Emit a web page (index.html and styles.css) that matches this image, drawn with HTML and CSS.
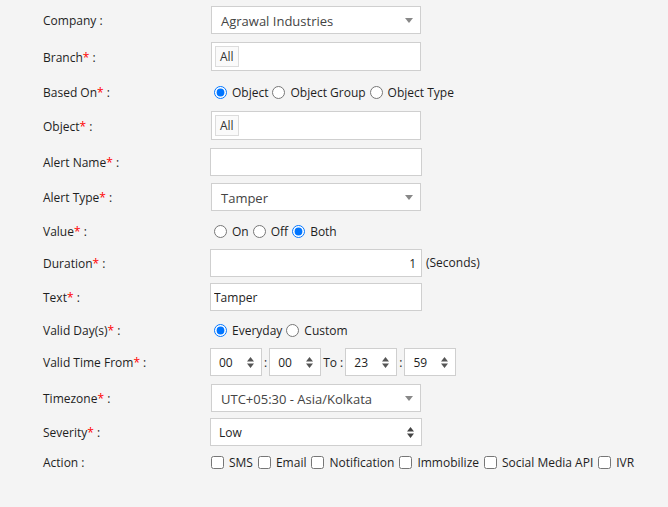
FILE: index.html
```html
<!DOCTYPE html>
<html>
<head>
<meta charset="utf-8">
<link rel="stylesheet" href="styles.css">
</head>
<body>
<form class="form">
  <div class="row">
    <label class="lbl">Company :</label>
    <div class="s2">
      <span class="s2-text">Agrawal Industries</span>
      <svg class="s2-arrow" width="8" height="5" viewBox="0 0 8 5"><path d="M0 0H8L4 5Z" fill="#888"/></svg>
    </div>
  </div>
  <div class="row">
    <label class="lbl">Branch<span class="req">*</span> :</label>
    <div class="tagbox"><span class="tag">All</span></div>
  </div>
  <div class="row">
    <label class="lbl">Based On<span class="req">*</span> :</label>
    <div class="opts">
      <label class="opt"><input type="radio" name="based" checked>Object</label>
      <label class="opt"><input type="radio" name="based">Object Group</label>
      <label class="opt"><input type="radio" name="based">Object Type</label>
    </div>
  </div>
  <div class="row">
    <label class="lbl">Object<span class="req">*</span> :</label>
    <div class="tagbox"><span class="tag">All</span></div>
  </div>
  <div class="row">
    <label class="lbl">Alert Name<span class="req">*</span> :</label>
    <input class="txt" type="text" value="">
  </div>
  <div class="row">
    <label class="lbl">Alert Type<span class="req">*</span> :</label>
    <div class="s2">
      <span class="s2-text">Tamper</span>
      <svg class="s2-arrow" width="8" height="5" viewBox="0 0 8 5"><path d="M0 0H8L4 5Z" fill="#888"/></svg>
    </div>
  </div>
  <div class="row">
    <label class="lbl">Value<span class="req">*</span> :</label>
    <div class="opts">
      <label class="opt"><input type="radio" name="val">On</label>
      <label class="opt"><input type="radio" name="val">Off</label>
      <label class="opt"><input type="radio" name="val" checked>Both</label>
    </div>
  </div>
  <div class="row">
    <label class="lbl">Duration<span class="req">*</span> :</label>
    <input class="txt num" type="text" value="1">
    <span class="unit">(Seconds)</span>
  </div>
  <div class="row">
    <label class="lbl">Text<span class="req">*</span> :</label>
    <input class="txt" type="text" value="Tamper">
  </div>
  <div class="row">
    <label class="lbl">Valid Day(s)<span class="req">*</span> :</label>
    <div class="opts">
      <label class="opt"><input type="radio" name="day" checked>Everyday</label>
      <label class="opt"><input type="radio" name="day">Custom</label>
    </div>
  </div>
  <div class="row">
    <label class="lbl">Valid Time From<span class="req">*</span> :</label>
    <div class="time">
      <div class="tsel"><span>00</span><svg class="updown" width="7" height="11" viewBox="0 0 7 11"><path d="M0 4.5L3.5 0L7 4.5ZM0 6.5H7L3.5 11Z" fill="#555"/></svg></div>
      <span class="sep">:</span>
      <div class="tsel"><span>00</span><svg class="updown" width="7" height="11" viewBox="0 0 7 11"><path d="M0 4.5L3.5 0L7 4.5ZM0 6.5H7L3.5 11Z" fill="#555"/></svg></div>
      <span class="sep to">To :</span>
      <div class="tsel"><span>23</span><svg class="updown" width="7" height="11" viewBox="0 0 7 11"><path d="M0 4.5L3.5 0L7 4.5ZM0 6.5H7L3.5 11Z" fill="#555"/></svg></div>
      <span class="sep">:</span>
      <div class="tsel"><span>59</span><svg class="updown" width="7" height="11" viewBox="0 0 7 11"><path d="M0 4.5L3.5 0L7 4.5ZM0 6.5H7L3.5 11Z" fill="#555"/></svg></div>
    </div>
  </div>
  <div class="row">
    <label class="lbl">Timezone<span class="req">*</span> :</label>
    <div class="s2">
      <span class="s2-text">UTC+05:30 - Asia/Kolkata</span>
      <svg class="s2-arrow" width="8" height="5" viewBox="0 0 8 5"><path d="M0 0H8L4 5Z" fill="#888"/></svg>
    </div>
  </div>
  <div class="row">
    <label class="lbl">Severity<span class="req">*</span> :</label>
    <div class="nsel">
      <span>Low</span>
      <svg class="updown" width="7" height="11" viewBox="0 0 7 11"><path d="M0 4.5L3.5 0L7 4.5ZM0 6.5H7L3.5 11Z" fill="#444"/></svg>
    </div>
  </div>
  <div class="row">
    <label class="lbl">Action :</label>
    <div class="opts checks">
      <label class="opt"><input type="checkbox">SMS</label>
      <label class="opt"><input type="checkbox">Email</label>
      <label class="opt"><input type="checkbox">Notification</label>
      <label class="opt"><input type="checkbox">Immobilize</label>
      <label class="opt"><input type="checkbox">Social Media API</label>
      <label class="opt"><input type="checkbox">IVR</label>
    </div>
  </div>
</form>
</body>
</html>
```

FILE: styles.css
```css
html, body {
  margin: 0;
  padding: 0;
  background: #f4f4f4;
}
body {
  font-family: "Open Sans", "Noto Sans", sans-serif;
  font-size: 12px;
  color: #1e1e1e;
}
.form {
  display: grid;
  grid-template-rows: 36px 37px 32px 37px 35px 35px 31px 34px 34px 31px 36px 34px 31px 26px;
  align-items: start;
  padding: 6px 0 0 43px;
}
.row {
  display: flex;
  align-items: center;
  min-height: 26px;
}
.lbl {
  width: 167px;
  flex: none;
  white-space: nowrap;
}
.row > .lbl {
  padding-top: 1px;
}
.req {
  color: #ff0000;
}
.s2 {
  box-sizing: border-box;
  width: 210px;
  height: 28px;
  margin-left: 1px;
  background: #fff;
  border: 1px solid #cfcfcf;
  display: flex;
  align-items: center;
  justify-content: space-between;
  padding: 1px 7px 0 9px;
  font-size: 13px;
  color: #444;
}
.s2-arrow {
  display: block;
}
.tagbox {
  box-sizing: border-box;
  width: 210px;
  height: 29px;
  margin-left: 1px;
  background: #fff;
  border: 1px solid #cfcfcf;
  display: flex;
  align-items: center;
  padding: 0 3px;
}
.tag {
  box-sizing: border-box;
  height: 21px;
  padding: 0 4px;
  border: 1px solid #dcdcdc;
  background: #fafafa;
  line-height: 19px;
  color: #333;
}
.txt {
  box-sizing: border-box;
  width: 212px;
  height: 28px;
  margin: 0;
  background: #fff;
  border: 1px solid #cfcfcf;
  border-radius: 0;
  padding: 0 3px;
  font-family: inherit;
  font-size: 12px;
  color: #1e1e1e;
  outline: none;
}
.txt.num {
  text-align: right;
  padding-right: 5px;
}
.unit {
  margin-left: 4px;
  margin-top: -2px;
}
.opts {
  display: flex;
  align-items: center;
  gap: 4px;
}
.opt {
  display: inline-flex;
  align-items: center;
  gap: 5px;
  white-space: nowrap;
}
.opt input {
  margin: 0;
  width: 13px;
  height: 13px;
  accent-color: #0075ff;
}
.opts > .opt:first-child {
  margin-left: 4px;
}
.checks > .opt:first-child {
  margin-left: 1px;
}
.checks {
  gap: 5px;
}
.time {
  display: flex;
  align-items: center;
}
.tsel {
  box-sizing: border-box;
  width: 52px;
  height: 28px;
  background: #fff;
  border: 1px solid #cfcfcf;
  display: flex;
  align-items: center;
  justify-content: space-between;
  padding: 0 7px 0 8px;
}
.sep {
  padding: 0 2px 0 2px;
}
.updown {
  display: block;
}
.nsel {
  box-sizing: border-box;
  width: 212px;
  height: 28px;
  background: #fff;
  border: 1px solid #cfcfcf;
  display: flex;
  align-items: center;
  justify-content: space-between;
  padding: 0 7px 0 8px;
  color: #1e1e1e;
}
```
